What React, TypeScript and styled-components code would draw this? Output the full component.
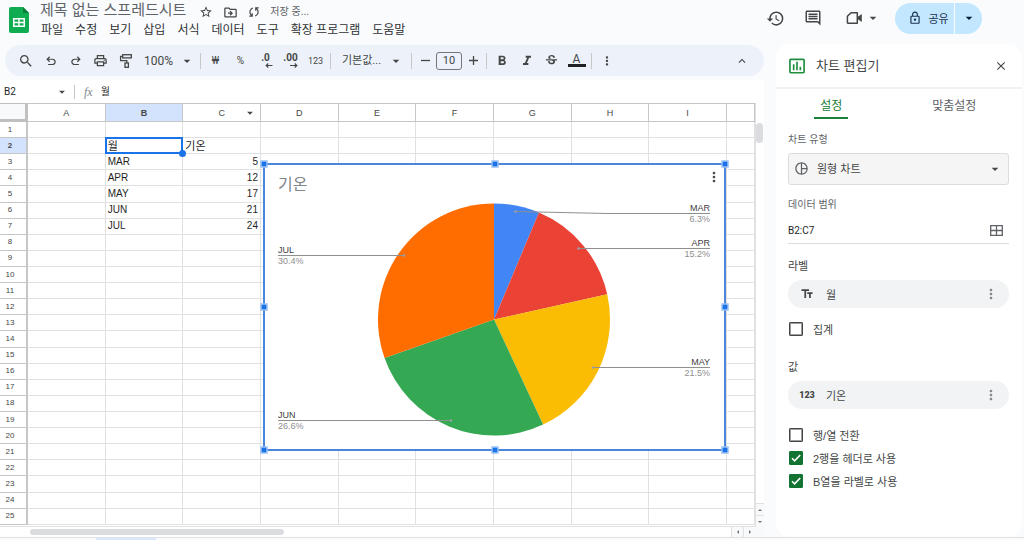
import React, { useState } from "react";
import styled, { createGlobalStyle, css } from "styled-components";
import {
  MdArrowDropDown,
  MdClose,
  MdFormatBold,
  MdFormatItalic,
  MdHistory,
  MdInsertChartOutlined,
  MdKeyboardArrowUp,
  MdMoreVert,
  MdOutlineComment,
  MdOutlineDriveFileMove,
  MdOutlineLock,
  MdOutlinePrint,
  MdPieChartOutline,
  MdSearch,
  MdStarBorder,
  MdStrikethroughS,
  MdTextFields,
} from "react-icons/md";

const sans = `"Liberation Sans", "Noto Sans CJK KR", sans-serif`;
const ui = `Roboto, "Noto Sans CJK KR", sans-serif`;

const color = {
  page: "#f9fbfd",
  text: "#1f1f1f",
  icon: "#444746",
  muted: "#5f6368",
  gridLine: "#e1e1e1",
  headLine: "#c4c7c5",
  selected: "#d3e3fd",
  blue: "#1a73e8",
  green: "#188038",
};

const Global = createGlobalStyle`
  *, *::before, *::after { box-sizing: border-box; }
  body { margin: 0; background: ${color.page}; font-family: ${sans}; color: ${color.text}; }
  button, input, select { font: inherit; color: inherit; margin: 0; padding: 0; border: 0; background: none; }
  button { cursor: pointer; }
  svg { display: block; flex: none; }
`;

const Page = styled.div`
  display: flex;
  flex-direction: column;
  height: 100vh;
  min-height: 520px;
  overflow: hidden;
`;

/* ---------- header ---------- */

const Header = styled.header`
  display: flex;
  align-items: flex-start;
  flex: none;
  height: 44px;
  padding: 0 42px 0 8px;
`;

const LogoLink = styled.a`
  display: block;
  padding-top: 6px;
  margin-right: 10px;
`;

const Heading = styled.div`
  flex: 1;
  min-width: 0;
`;

const TitleRow = styled.div`
  display: flex;
  align-items: center;
  gap: 8px;
  height: 20px;
  color: ${color.icon};
`;

const Title = styled.h1`
  margin: 0 4px 0 0;
  font-size: 15px;
  font-weight: 400;
  line-height: 20px;
  white-space: nowrap;
  color: ${color.muted};
`;

const TitleButton = styled.button`
  display: grid;
  place-items: center;
  width: 16px;
  height: 20px;
  padding-top: 4px;
`;

const SaveState = styled.span`
  padding-top: 4px;
  font-size: 10px;
  line-height: 16px;
  color: ${color.muted};
`;

const Menus = styled.nav`
  display: flex;
  gap: 12px;
  padding-left: 1px;
`;

const MenuButton = styled.button`
  font-size: 12px;
  line-height: 20px;
  white-space: nowrap;
  color: #303133;
`;

const Actions = styled.div`
  display: flex;
  align-items: center;
  gap: 14px;
  height: 36px;
  color: ${color.icon};
`;

const ActionGroup = styled.div`
  display: flex;
  align-items: center;
  gap: 19px;
`;

const ActionButton = styled.button<{ $wide?: boolean }>`
  display: flex;
  align-items: center;
  gap: ${(p) => (p.$wide ? 2 : 0)}px;
  height: 20px;
  padding-left: ${(p) => (p.$wide ? 5 : 0)}px;
`;

const Share = styled.div`
  display: flex;
  height: 31px;
  border-radius: 16px;
  overflow: hidden;
  background: #c2e7ff;
  color: #001d35;
`;

const ShareMain = styled.button`
  display: flex;
  align-items: center;
  justify-content: center;
  gap: 6px;
  width: 60px;
  padding-left: 8px;
  font-size: 11px;
  color: #1b3050;
  border-right: 1px solid ${color.page};
`;

const ShareMore = styled.button`
  display: grid;
  place-items: center;
  width: 27px;
`;

/* ---------- body ---------- */

const Body = styled.div`
  display: flex;
  flex: 1;
  min-height: 0;
  gap: 12px;
  padding-right: 2px;
`;

const Workspace = styled.main`
  display: flex;
  flex-direction: column;
  flex: 1;
  min-width: 0;
`;

const Toolbar = styled.div`
  display: flex;
  align-items: center;
  flex: none;
  height: 31px;
  margin: 1px 0 4px 5px;
  padding: 0 10px 0 8px;
  border-radius: 16px;
  background: #edf2fa;
  color: ${color.icon};
`;

const Tool = styled.button<{ $small?: boolean; $text?: number }>`
  display: flex;
  flex-direction: column;
  align-items: center;
  justify-content: center;
  flex: none;
  width: ${(p) => (p.$small ? 22 : 25)}px;
  height: 24px;
  font-family: ${ui};
  font-size: ${(p) => p.$text ?? 11}px;
  line-height: 10px;
`;

const Divider = styled.span`
  flex: none;
  width: 1px;
  height: 16px;
  margin: 0 2px;
  background: #c7c7c7;
`;

const Spacer = styled.span`
  flex: 1;
`;

const SelectBox = styled.label<{ $width?: number; $caret: number }>`
  position: relative;
  display: block;
  flex: none;
  width: ${(p) => (p.$width ? `${p.$width}px` : "100%")};

  > svg:last-child {
    position: absolute;
    right: ${(p) => p.$caret}px;
    top: 50%;
    transform: translateY(-50%);
    pointer-events: none;
  }
`;

const ToolSelect = styled.select<{ $size: number; $inset: number }>`
  appearance: none;
  width: 100%;
  height: 24px;
  padding-left: ${(p) => p.$inset}px;
  font-family: ${ui};
  font-size: ${(p) => p.$size}px;
`;

const SizeInput = styled.input`
  flex: none;
  width: 26px;
  height: 18px;
  border: 1px solid #747775;
  border-radius: 3px;
  font-family: ${ui};
  font-size: 11px;
  text-align: center;
`;

const ColorBar = styled.span`
  width: 18px;
  height: 3px;
  background: #202124;
`;

const FormulaBar = styled.div`
  display: flex;
  align-items: center;
  flex: none;
  height: 23px;
  background: #fff;
`;

const NameInput = styled.input`
  width: 54px;
  padding-left: 4px;
  font-family: ${ui};
  font-size: 10px;
`;

const CaretButton = styled.button`
  display: grid;
  place-items: center;
  width: 16px;
  height: 16px;
  color: ${color.icon};
`;

const FormulaMark = styled.span`
  padding: 0 8px 0 9px;
  margin-left: 4px;
  border-left: 1px solid ${color.headLine};
  font-family: "Liberation Serif", serif;
  font-size: 12px;
  line-height: 14px;
  font-style: italic;
  color: #80868b;
`;

const FormulaInput = styled.input`
  flex: 1;
  min-width: 0;
  font-size: 10px;
  line-height: 16px;
`;

/* ---------- sheet ---------- */

const SheetArea = styled.div`
  display: grid;
  grid-template-columns: minmax(0, 1fr) 9px;
  grid-template-rows: minmax(0, 1fr) 10px;
  flex: 1;
  min-height: 0;
  background: #fff;
`;

const Canvas = styled.div`
  position: relative;
  min-height: 0;
  padding-bottom: 1px;
  border-bottom: 1px solid ${color.gridLine};
`;

const Table = styled.table`
  width: 100%;
  height: 100%;
  table-layout: fixed;
  border-collapse: separate;
  border-spacing: 0;
  font-size: 10px;
  line-height: 14px;

  th,
  td {
    padding: 0;
  }
`;

const headCell = css`
  font-weight: 400;
  font-size: 9px;
  color: ${color.icon};
  text-align: center;
`;

const Corner = styled.th`
  width: 28px;
  height: 19px;
  background: #f8f9fa;
  border: solid #c0c0c0;
  border-width: 1px 3px 3px 0;
`;

const ColHead = styled.th<{ $active?: boolean; $last?: boolean }>`
  ${headCell}
  position: relative;
  height: 19px;
  border: solid ${color.headLine};
  border-width: 1px 1px 1px 0;
  ${(p) => p.$last && "width: 28px;"}
  ${(p) => p.$active && `background: ${color.selected}; font-weight: 700;`}
`;

const HeadCaret = styled.button`
  position: absolute;
  right: 3px;
  top: 2px;
  color: ${color.icon};
`;

const RowHead = styled.th<{ $active?: boolean }>`
  ${headCell}
  && {
    padding-right: 6px;
  }
  border-right: 2px solid ${color.headLine};
  border-bottom: 1px solid ${color.headLine};
  font-size: 8px;
  ${(p) => p.$active && `background: ${color.selected}; font-weight: 700;`}
`;

const Cell = styled.td<{ $num?: boolean; $head?: boolean; $active?: boolean }>`
  position: relative;
  border-right: 1px solid ${color.gridLine};
  border-bottom: 1px solid ${color.gridLine};
  && {
    padding: 0 2px;
  }
  white-space: nowrap;
  text-align: ${(p) => (p.$num ? "right" : "left")};
  ${(p) => p.$head && "font-size: 11px;"}
  ${(p) =>
    p.$active &&
    `
    &::before {
      content: "";
      position: absolute;
      inset: -1px -1px -1px -1px;
      border: 2px solid ${color.blue};
    }
    &::after {
      content: "";
      position: absolute;
      right: -4px;
      bottom: -4px;
      width: 7px;
      height: 7px;
      border-radius: 50%;
      background: ${color.blue};
      z-index: 1;
    }
  `}
`;

const VScroll = styled.div`
  display: flex;
  flex-direction: column;
  justify-content: space-between;
  border-left: 1px solid ${color.gridLine};
`;

const VThumb = styled.div`
  width: 7px;
  height: 20px;
  margin-top: 20px;
  border-radius: 4px;
  background: #dadce0;
`;

const HScroll = styled.div`
  display: flex;
  align-items: center;
  justify-content: space-between;
  padding-left: 30px;
`;

const HThumb = styled.div`
  width: 35%;
  height: 6px;
  border-radius: 3px;
  background: #dadce0;
`;

const ScrollButtons = styled.div<{ $vertical?: boolean }>`
  display: flex;
  flex-direction: ${(p) => (p.$vertical ? "column" : "row")};
`;

const ScrollButton = styled.button<{ $vertical?: boolean }>`
  display: grid;
  place-items: center;
  width: ${(p) => (p.$vertical ? 8 : 12)}px;
  height: ${(p) => (p.$vertical ? 12 : 10)}px;
  background: #f8f9fa;
  border: 0 solid ${color.gridLine};
  border-width: ${(p) => (p.$vertical ? "1px 0 0 0" : "0 0 0 1px")};
`;

const ScrollCorner = styled.div`
  background: #f8f9fa;
`;

/* ---------- chart ---------- */

const ChartFrame = styled.figure`
  position: absolute;
  left: 263px;
  top: 60px;
  width: 463px;
  height: 288px;
  margin: 0;
  border: 2px solid #4a86d9;
  background: #fff;
`;

const ChartSvg = styled.svg`
  position: absolute;
  left: -2px;
  top: -1px;
`;

const ChartTitle = styled.figcaption`
  padding: 9px 13px;
  font-size: 16px;
  line-height: 22px;
  color: #80868b;
`;

const ChartMenu = styled.button`
  position: absolute;
  right: 2px;
  top: 4px;
  color: ${color.icon};
`;

const HandleLayer = styled.div`
  position: absolute;
  inset: -1px;
  pointer-events: none;
`;

const Handle = styled.span<{ $x: number; $y: number }>`
  position: absolute;
  left: ${(p) => p.$x}%;
  top: ${(p) => p.$y}%;
  width: 7px;
  height: 7px;
  transform: translate(-50%, -50%);
  border: 1px solid #d6e5fc;
  background: ${color.blue};
`;

/* ---------- side panel ---------- */

const Panel = styled.aside`
  display: flex;
  flex-direction: column;
  flex: none;
  width: 246px;
  border-radius: 14px;
  background: #fff;
  overflow: hidden;
`;

const PanelHead = styled.div`
  display: flex;
  align-items: center;
  height: 45px;
  padding: 0 12px 0 11px;
  border-bottom: 2px solid #eff1f2;
`;

const PanelTitle = styled.h2`
  flex: 1;
  margin: 0 0 0 9px;
  font-size: 13px;
  font-weight: 400;
  line-height: 20px;
  color: ${color.icon};
`;

const CloseButton = styled.button`
  display: grid;
  place-items: center;
  width: 18px;
  height: 18px;
  color: ${color.icon};
`;

const Tabs = styled.div`
  display: grid;
  grid-template-columns: 9fr 11fr;
  justify-items: center;
`;

const Tab = styled.button<{ $active?: boolean }>`
  height: 30px;
  padding: 6px 6px 0;
  font-size: 12px;
  line-height: 20px;
  color: ${(p) => (p.$active ? color.green : color.muted)};
  border-bottom: 2px solid ${(p) => (p.$active ? color.green : "transparent")};
`;

const Form = styled.form`
  display: flex;
  flex-direction: column;
  padding: 14px 13px 0 12px;
  color: ${color.icon};
`;

const FieldLabel = styled.label`
  margin-bottom: 6px;
  font-size: 10px;
  line-height: 14px;
  color: ${color.muted};
`;

const TypeSelect = styled.select`
  appearance: none;
  width: 100%;
  height: 32px;
  padding-left: 28px;
  border: 1px solid #dadce0;
  border-radius: 3px;
  background: #f5f5f5;
  font-size: 11px;
`;

const TypeIcon = styled.span`
  position: absolute;
  left: 6px;
  top: 8px;
  color: ${color.muted};
`;

const RangeRow = styled.div`
  display: flex;
  align-items: center;
  height: 26px;
  padding-right: 6px;
  margin-bottom: 14px;
  border-bottom: 1px solid #dadce0;
`;

const RangeInput = styled.input`
  flex: 1;
  min-width: 0;
  font-family: ${ui};
  font-size: 10px;
  color: ${color.text};
`;

const SectionTitle = styled.h3`
  margin: 0 0 6px;
  font-size: 11px;
  font-weight: 400;
  line-height: 16px;
`;

const Chip = styled.div`
  display: flex;
  align-items: center;
  height: 28px;
  padding: 0 10px;
  border-radius: 14px;
  background: #f1f3f4;
  font-size: 11px;
`;

const ChipIcon = styled.span`
  display: grid;
  place-items: center;
  width: 18px;
  margin-right: 10px;
`;

const NumberMark = styled.b`
  font-family: ${ui};
  font-size: 9px;
  font-weight: 900;
`;

const ChipText = styled.span`
  flex: 1;
`;

const ChipMenu = styled.button`
  color: #80868b;
`;

const CheckRow = styled.label`
  display: flex;
  align-items: center;
  gap: 10px;
  height: 23px;
  padding-left: 1px;
  font-size: 11px;
`;

const Check = styled.input`
  appearance: none;
  width: 14px;
  height: 14px;
  border: 1px solid ${color.icon};
  border-radius: 1px;
  background: #fff;
  box-shadow: inset 0 0 0 1px #9a9d9f;

  &:checked {
    border-color: #137333;
    box-shadow: none;
    background: #137333
      url("data:image/svg+xml,%3Csvg xmlns='http://www.w3.org/2000/svg' viewBox='0 0 12 12'%3E%3Cpath d='M2 6.3l2.6 2.6L10.2 3' fill='none' stroke='white' stroke-width='1.6'/%3E%3C/svg%3E")
      center / 12px 12px no-repeat;
  }
`;

const Group = styled.div<{ $before?: number; $after?: number }>`
  margin: ${(p) => p.$before ?? 0}px 0 ${(p) => p.$after ?? 0}px;
`;

/* ---------- footer ---------- */

const SheetTabs = styled.footer`
  display: flex;
  flex: none;
  height: 3px;
  padding-left: 96px;
  border-top: 1px solid #dfe1e3;
`;

const SheetTab = styled.div`
  width: 60px;
  background: #dbe8fb;
`;

/* ---------- icons ---------- */

const Logo = () => (
  <svg width="22" height="28" viewBox="0 0 22 28">
    <path d="M3 1H15L21 7V25a2 2 0 0 1-2 2H3a2 2 0 0 1-2-2V3a2 2 0 0 1 2-2z" fill="#0fac52" />
    <path d="M15 1L21 7H15z" fill="#0a7f3b" />
    <rect x="5" y="12" width="12" height="9" fill="#fff" />
    <path d="M6.500 13.500h3.800v2.300H6.500zM11.700 13.500h3.800v2.300h-3.800zM6.500 17.200h3.800v2.300H6.500zM11.700 17.200h3.800v2.300h-3.800z" fill="#0fac52" />
  </svg>
);

const Symbol = ({ d, size = 14 }: { d: string; size?: number }) => (
  <svg width={size} height={size} viewBox="0 -960 960 960" fill="currentColor">
    <path d={d} />
  </svg>
);

const UNDO =
  "M280-200v-80h284q63 0 109.500-40T720-420q0-60-46.500-100T564-560H312l104 104-56 56-200-200 200-200 56 56-104 104h252q97 0 169 63t72 157q0 94-72 157t-169 63H280Z";
const REDO =
  "M396-200q-97 0-169-63t-72-157q0-94 72-157t169-63h252L544-744l56-56 200 200-200 200-56-56 104-104H396q-63 0-109.500 40T240-420q0 60 46.500 100T396-280h284v80H396Z";
const SYNC =
  "M160-160v-80h110l-16-14q-52-46-73-105t-21-119q0-111 66.500-197.500T400-790v84q-72 26-116 88.500T240-478q0 45 17 87.500t53 78.500l10 10v-98h80v240H160Zm400-10v-84q72-26 116-88.500T720-482q0-45-17-87.500T650-648l-10-10v98h-80v-240h240v80H690l16 14q49 49 71.500 106.500T800-482q0 111-66.500 197.500T560-170Z";

const RollerIcon = () => (
  <svg width="14" height="16" viewBox="0 0 14 16" fill="none" stroke="currentColor" strokeWidth="1.3">
    <rect x="3.700" y="1.700" width="8.600" height="3.200" />
    <path d="M3.700 3.300H1.600V7.700H7.800V10" />
    <rect x="6" y="10" width="3.400" height="4.300" />
  </svg>
);

const VideoIcon = () => (
  <svg width="17" height="16" viewBox="0 0 17 16">
    <path
      d="M5 2.700H11.300V13.300H2.200A.8.8 0 0 1 1.400 12.500V6.300z"
      fill="none"
      stroke="currentColor"
      strokeWidth="1.500"
      strokeLinejoin="round"
    />
    <path d="M11.500 7L15.800 4V12L11.500 9z" fill="currentColor" />
  </svg>
);

const ShiftArrow = ({ right }: { right?: boolean }) => (
  <svg width="14" height="5" viewBox="0 0 14 5" fill="none" stroke="currentColor" strokeWidth="1.200">
    <path d={right ? "M6 2.500H13M10.700 .5L12.800 2.500L10.700 4.500" : "M13.500 2.500H7M9.300 .5L7.200 2.500L9.300 4.500"} />
  </svg>
);

const WindowIcon = () => (
  <svg width="13" height="11" viewBox="0 0 13 11" fill="none" stroke={color.muted} strokeWidth="1.300">
    <path d="M.7.7H12.300V10.300H.7zM6.500 .7V10.300M.7 5.500H12.300" />
  </svg>
);

const Triangle = ({ d }: { d: string }) => (
  <svg width="6" height="6" viewBox="0 0 6 6" fill="#757575">
    <path d={d} />
  </svg>
);

/* ---------- data ---------- */

const menus = ["파일", "수정", "보기", "삽입", "서식", "데이터", "도구", "확장 프로그램", "도움말"];
const columns = ["A", "B", "C", "D", "E", "F", "G", "H", "I", ""];
const rowNumbers = Array.from({ length: 25 }, (_, i) => i + 1);

type Slice = {
  name: string;
  value: number;
  percent: string;
  fill: string;
  side: "left" | "right";
  y: number;
  line: string;
  dot: [number, number];
};

const slices: Slice[] = [
  { name: "MAR", value: 5, percent: "6.3%", fill: "#4285f4", side: "right", y: 49.5, line: "M252.500 47.500L344 49.500H447", dot: [252.5, 47.5] },
  { name: "APR", value: 12, percent: "15.2%", fill: "#ea4335", side: "right", y: 84.5, line: "M315.500 84.500H447", dot: [315.5, 84.5] },
  { name: "MAY", value: 17, percent: "21.5%", fill: "#fbbc04", side: "right", y: 203.5, line: "M330 203.500H447", dot: [330, 203.5] },
  { name: "JUN", value: 21, percent: "26.6%", fill: "#34a853", side: "left", y: 256.5, line: "M15 256.500H188", dot: [188, 256.5] },
  { name: "JUL", value: 24, percent: "30.4%", fill: "#ff6d01", side: "left", y: 91.5, line: "M15 91.500H141", dot: [141, 91.5] },
];

const CX = 231;
const CY = 155.5;
const R = 116;

const point = (turn: number) => {
  const a = turn * Math.PI * 2;
  return `${(CX + R * Math.sin(a)).toFixed(2)} ${(CY - R * Math.cos(a)).toFixed(2)}`;
};

const total = slices.reduce((sum, s) => sum + s.value, 0);

const PieChart = () => {
  let start = 0;
  return (
    <ChartSvg width="463" height="287" viewBox="0 0 463 287" fontFamily={sans} fontSize="9">
      {slices.map((s) => {
        const from = start;
        start += s.value / total;
        return <path key={s.name} fill={s.fill} d={`M${CX} ${CY}L${point(from)}A${R} ${R} 0 0 1 ${point(start)}Z`} />;
      })}
      {slices.map((s) => {
        const right = s.side === "right";
        const x = right ? 447 : 15;
        const anchor = right ? "end" : "start";
        return (
          <g key={s.name}>
            <path d={s.line} fill="none" stroke="#8f8f8f" strokeWidth="1" />
            <circle cx={s.dot[0]} cy={s.dot[1]} r="1.3" fill="#9aa0a6" />
            <text x={x} y={s.y - 2.5} textAnchor={anchor} fill="#424242">
              {s.name}
            </text>
            <text x={x} y={s.y + 8.5} textAnchor={anchor} fill="#8e8e8e">
              {s.percent}
            </text>
          </g>
        );
      })}
    </ChartSvg>
  );
};

const handles: [number, number][] = [
  [0, 0], [50, 0], [100, 0], [0, 50], [100, 50], [0, 100], [50, 100], [100, 100],
];

const cellText = (row: number, col: string): string | number => {
  if (row === 2) return col === "B" ? "월" : col === "C" ? "기온" : "";
  const slice = slices[row - 3];
  if (!slice) return "";
  return col === "B" ? slice.name : col === "C" ? slice.value : "";
};

const CheckField = ({ label, initial = false }: { label: string; initial?: boolean }) => {
  const [on, setOn] = useState(initial);
  return (
    <CheckRow>
      <Check type="checkbox" checked={on} onChange={() => setOn(!on)} />
      {label}
    </CheckRow>
  );
};

export default function App() {
  return (
    <Page>
      <Global />
      <Header>
        <LogoLink href="#" aria-label="Sheets">
          <Logo />
        </LogoLink>
        <Heading>
          <TitleRow>
            <Title>제목 없는 스프레드시트</Title>
            <TitleButton aria-label="별표"><MdStarBorder size={14} /></TitleButton>
            <TitleButton aria-label="이동"><MdOutlineDriveFileMove size={15} /></TitleButton>
            <TitleButton aria-label="동기화"><Symbol d={SYNC} /></TitleButton>
            <SaveState>저장 중...</SaveState>
          </TitleRow>
          <Menus>
            {menus.map((m) => (
              <MenuButton key={m}>{m}</MenuButton>
            ))}
          </Menus>
        </Heading>
        <Actions>
          <ActionGroup>
            <ActionButton aria-label="기록"><MdHistory size={19} /></ActionButton>
            <ActionButton aria-label="댓글"><MdOutlineComment size={18} /></ActionButton>
            <ActionButton $wide aria-label="통화">
              <VideoIcon />
              <MdArrowDropDown size={16} />
            </ActionButton>
          </ActionGroup>
          <Share>
            <ShareMain>
              <MdOutlineLock size={14} />
              공유
            </ShareMain>
            <ShareMore aria-label="공유 옵션"><MdArrowDropDown size={16} /></ShareMore>
          </Share>
        </Actions>
      </Header>

      <Body>
        <Workspace>
          <Toolbar role="toolbar">
            <Tool aria-label="검색"><MdSearch size={16} /></Tool>
            <Tool aria-label="실행취소"><Symbol d={UNDO} /></Tool>
            <Tool aria-label="재실행"><Symbol d={REDO} /></Tool>
            <Tool aria-label="인쇄"><MdOutlinePrint size={15} /></Tool>
            <Tool aria-label="서식 복사"><RollerIcon /></Tool>
            <SelectBox $width={60} $caret={3}>
              <ToolSelect $size={12} $inset={6} aria-label="확대/축소">
                <option>100%</option>
              </ToolSelect>
              <MdArrowDropDown size={16} />
            </SelectBox>
            <Divider />
            <Tool $text={10}>₩</Tool>
            <Tool $text={10}>%</Tool>
            <Tool $text={10} aria-label="소수점 자릿수 감소">
              <b>.0</b>
              <ShiftArrow />
            </Tool>
            <Tool $text={10} aria-label="소수점 자릿수 증가">
              <b>.00</b>
              <ShiftArrow right />
            </Tool>
            <Tool $text={9}>123</Tool>
            <Divider />
            <SelectBox $width={76} $caret={5}>
              <ToolSelect $size={11} $inset={9} aria-label="글꼴">
                <option>기본값...</option>
              </ToolSelect>
              <MdArrowDropDown size={16} />
            </SelectBox>
            <Divider />
            <Tool $small aria-label="글꼴 크기 줄이기">
              <svg width="9" height="9" viewBox="0 0 9 9"><path d="M0 4.500H9" stroke="currentColor" strokeWidth="1.300" /></svg>
            </Tool>
            <SizeInput aria-label="글꼴 크기" defaultValue="10" />
            <Tool $small aria-label="글꼴 크기 늘리기">
              <svg width="9" height="9" viewBox="0 0 9 9"><path d="M0 4.500H9M4.500 0V9" stroke="currentColor" strokeWidth="1.300" /></svg>
            </Tool>
            <Divider />
            <Tool aria-label="굵게"><MdFormatBold size={16} /></Tool>
            <Tool aria-label="기울임꼴"><MdFormatItalic size={16} /></Tool>
            <Tool aria-label="취소선"><MdStrikethroughS size={15} /></Tool>
            <Tool $text={12} aria-label="텍스트 색상">
              A
              <ColorBar />
            </Tool>
            <Divider />
            <Tool aria-label="더보기"><MdMoreVert size={14} /></Tool>
            <Spacer />
            <Tool aria-label="메뉴 숨기기"><MdKeyboardArrowUp size={14} /></Tool>
          </Toolbar>

          <FormulaBar>
            <NameInput aria-label="이름 상자" defaultValue="B2" />
            <CaretButton aria-label="이름 범위"><MdArrowDropDown size={14} /></CaretButton>
            <FormulaMark>fx</FormulaMark>
            <FormulaInput aria-label="수식 입력줄" defaultValue="월" />
          </FormulaBar>

          <SheetArea>
            <Canvas>
              <Table>
                <thead>
                  <tr>
                    <Corner />
                    {columns.map((c) => (
                      <ColHead key={c} scope="col" $active={c === "B"} $last={c === ""}>
                        {c}
                        {c === "C" && (
                          <HeadCaret aria-label="열 메뉴"><MdArrowDropDown size={14} /></HeadCaret>
                        )}
                      </ColHead>
                    ))}
                  </tr>
                </thead>
                <tbody>
                  {rowNumbers.map((n) => (
                    <tr key={n}>
                      <RowHead scope="row" $active={n === 2}>{n}</RowHead>
                      {columns.map((c) => (
                        <Cell
                          key={c}
                          $num={c === "C" && n > 2}
                          $head={n === 2}
                          $active={c === "B" && n === 2}
                        >
                          {cellText(n, c)}
                        </Cell>
                      ))}
                    </tr>
                  ))}
                </tbody>
              </Table>
              <ChartFrame>
                <PieChart />
                <ChartTitle>기온</ChartTitle>
                <ChartMenu aria-label="차트 메뉴"><MdMoreVert size={16} /></ChartMenu>
                <HandleLayer>
                  {handles.map(([x, y]) => (
                    <Handle key={`${x}-${y}`} $x={x} $y={y} />
                  ))}
                </HandleLayer>
              </ChartFrame>
            </Canvas>
            <VScroll>
              <VThumb />
              <ScrollButtons $vertical>
                <ScrollButton $vertical aria-label="위로"><Triangle d="M3 2L5 4H1z" /></ScrollButton>
                <ScrollButton $vertical aria-label="아래로"><Triangle d="M1 2H5L3 4z" /></ScrollButton>
              </ScrollButtons>
            </VScroll>
            <HScroll>
              <HThumb />
              <ScrollButtons>
                <ScrollButton aria-label="왼쪽으로"><Triangle d="M4 1V5L2 3z" /></ScrollButton>
                <ScrollButton aria-label="오른쪽으로"><Triangle d="M2 1L4 3L2 5z" /></ScrollButton>
              </ScrollButtons>
            </HScroll>
            <ScrollCorner />
          </SheetArea>
        </Workspace>

        <Panel>
          <PanelHead>
            <MdInsertChartOutlined size={20} color="#1e8e3e" />
            <PanelTitle>차트 편집기</PanelTitle>
            <CloseButton aria-label="닫기"><MdClose size={14} /></CloseButton>
          </PanelHead>
          <Tabs role="tablist">
            <Tab role="tab" aria-selected="true" $active>설정</Tab>
            <Tab role="tab" aria-selected="false">맞춤설정</Tab>
          </Tabs>
          <Form>
            <FieldLabel htmlFor="chart-type">차트 유형</FieldLabel>
            <SelectBox $caret={6}>
              <TypeIcon><MdPieChartOutline size={15} /></TypeIcon>
              <TypeSelect id="chart-type">
                <option>원형 차트</option>
              </TypeSelect>
              <MdArrowDropDown size={16} />
            </SelectBox>
            <Group $before={13} />
            <FieldLabel htmlFor="data-range">데이터 범위</FieldLabel>
            <RangeRow>
              <RangeInput id="data-range" defaultValue="B2:C7" />
              <button type="button" aria-label="데이터 범위 선택"><WindowIcon /></button>
            </RangeRow>

            <SectionTitle>라벨</SectionTitle>
            <Chip>
              <ChipIcon><MdTextFields size={14} /></ChipIcon>
              <ChipText>월</ChipText>
              <ChipMenu type="button" aria-label="라벨 메뉴"><MdMoreVert size={16} /></ChipMenu>
            </Chip>
            <Group $before={9} $after={19}>
              <CheckField label="집계" />
            </Group>

            <SectionTitle>값</SectionTitle>
            <Chip>
              <ChipIcon><NumberMark>123</NumberMark></ChipIcon>
              <ChipText>기온</ChipText>
              <ChipMenu type="button" aria-label="값 메뉴"><MdMoreVert size={16} /></ChipMenu>
            </Chip>
            <Group $before={14}>
              <CheckField label="행/열 전환" />
              <CheckField label="2행을 헤더로 사용" initial />
              <CheckField label="B열을 라벨로 사용" initial />
            </Group>
          </Form>
        </Panel>
      </Body>

      <SheetTabs>
        <SheetTab />
      </SheetTabs>
    </Page>
  );
}
